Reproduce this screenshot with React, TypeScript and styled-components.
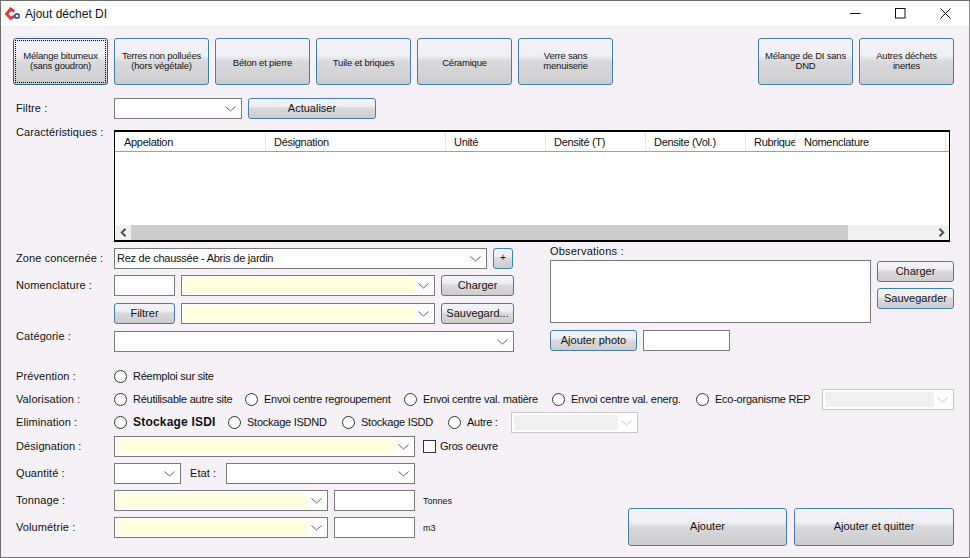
import React from 'react';
import styled, { createGlobalStyle } from 'styled-components';

const Global = createGlobalStyle`
  html, body { margin: 0; padding: 0; background: #fff; }
  * { box-sizing: border-box; }
`;

const sans = `"Liberation Sans", Arial, sans-serif`;

const Win = styled.div`
  width: 970px;
  height: 558px;
  border: 1px solid #6e6e6e;
  border-right-color: #8a8a8a;
  background: #f5f1f6;
  font-family: ${sans};
  font-size: 11px;
  color: #111;
  display: flex;
  flex-direction: column;
  overflow: hidden;
`;

const TitleBar = styled.div`
  height: 25px;
  flex: none;
  background: #fff;
  display: flex;
  align-items: center;
  padding: 0 1px 0 3px;
`;

const TitleText = styled.span`
  font-size: 12px;
  margin-left: 3px;
  flex: 1;
`;

const WinBtn = styled.div`
  width: 45px;
  height: 25px;
  display: flex;
  align-items: center;
  justify-content: center;
`;

const Content = styled.div`
  flex: 1;
  padding: 12px 15px 0 12px;
  display: flex;
  flex-direction: column;
  position: relative;
`;

const TopRow = styled.div`
  display: flex;
  gap: 6px;
  height: 47px;
  margin-bottom: 13px;
`;

const Spacer = styled.div`
  flex: 1;
`;

const Btn = styled.button<{ $w: number; $h?: number; $size?: number }>`
  width: ${p => p.$w}px;
  height: ${p => p.$h ?? 21}px;
  flex: none;
  padding: 0 2px 1px;
  border: 1px solid #3f7fb2;
  border-radius: 3px;
  background: linear-gradient(#f3f3f9 0%, #eeeef3 38%, #d9d8dc 50%, #cdcccd 100%);
  font-family: ${sans};
  font-size: ${p => p.$size ?? 11}px;
  line-height: 12px;
  color: #161616;
  text-align: center;
  white-space: nowrap;
`;

const TopBtn = styled(Btn)<{ $single?: boolean }>`
  line-height: 10px;
  letter-spacing: -0.2px;
  padding-top: ${p => (p.$single ? 3 : 0)}px;
  &[data-focus='1'] {
    outline: 1px dotted #000;
    outline-offset: -3px;
    border-color: #2b5f8a;
  }
`;

const BigBtn = styled(Btn)`
  padding-bottom: 3px;
`;

const Row = styled.div<{ $mb?: number }>`
  display: flex;
  align-items: center;
  height: 21px;
  margin-bottom: ${p => p.$mb ?? 6}px;
`;

const Label = styled.label<{ $top?: boolean; $lift?: number }>`
  width: 101px;
  flex: none;
  padding-left: 3px;
  padding-bottom: ${p => p.$lift ?? 2}px;
  font-size: 11px;
  letter-spacing: 0.1px;
  white-space: nowrap;
  align-self: ${p => (p.$top ? 'flex-start' : 'center')};
  margin-top: ${p => (p.$top ? -4 : 0)}px;
`;

const EtatLabel = styled(Label)`
  width: 38px;
  padding-left: 2px;
`;

const Box = styled.div<{ $w: number; $off?: boolean }>`
  width: ${p => p.$w}px;
  height: 21px;
  flex: none;
  background: #fff;
  border: 1px solid ${p => (p.$off ? '#c8c8c8' : '#7a7a7a')};
  position: relative;
  display: flex;
  align-items: center;
  padding: 0 0 2px 2px;
  font-size: 11px;
  letter-spacing: -0.25px;
  white-space: nowrap;
`;

const Fill = styled.div<{ $off?: boolean }>`
  position: absolute;
  left: 2px;
  top: 2px;
  bottom: 2px;
  right: 19px;
  background: ${p => (p.$off ? '#f0f0f0' : '#ffffe0')};
`;

const Chev = styled.svg`
  position: absolute;
  right: 5px;
  top: 7px;
`;

const Gap = styled.div<{ $w: number }>`
  width: ${p => p.$w}px;
  flex: none;
`;

function Select({ w, yellow, off, children }: { w: number; yellow?: boolean; off?: boolean; children?: React.ReactNode }) {
  return (
    <Box $w={w} $off={off}>
      {(yellow || off) && <Fill $off={off} />}
      {children}
      <Chev width="11" height="6" viewBox="0 0 11 6">
        <path d="M0.5 0.5 L5.5 5 L10.5 0.5" fill="none" stroke={off ? '#c4c4c4' : '#606060'} strokeWidth="1" />
      </Chev>
    </Box>
  );
}

const columns = [
  ['Appelation', 150],
  ['Désignation', 180],
  ['Unité', 100],
  ['Densité (T)', 100],
  ['Densite (Vol.)', 100],
  ['Rubrique', 50],
  ['Nomenclature', 150],
] as const;

const TableRow = styled.div`
  display: flex;
  height: 112px;
  margin-bottom: 6px;
`;

const Grid = styled.div`
  width: 836px;
  height: 112px;
  flex: none;
  background: #fff;
  border: 1px solid #000;
  border-top-width: 2px;
  border-bottom-width: 2px;
  display: flex;
  flex-direction: column;
`;

const GridHead = styled.div`
  height: 20px;
  flex: none;
  display: flex;
  padding-left: 1px;
  border-bottom: 1px solid #a0a0a0;
`;

const HeadCell = styled.div<{ $w: number }>`
  width: ${p => p.$w}px;
  flex: none;
  padding-left: 8px;
  overflow: hidden;
  white-space: nowrap;
  line-height: 20px;
  font-size: 11px;
  letter-spacing: -0.3px;
  border-right: 1px solid #e6e6e6;
`;

const GridBody = styled.div`
  flex: 1;
`;

const ScrollBar = styled.div`
  height: 15px;
  flex: none;
  background: #f0f0f0;
  display: flex;
  align-items: center;
  justify-content: space-between;
`;

const ScrollArrow = styled.div`
  width: 16px;
  height: 15px;
  flex: none;
  display: flex;
  align-items: center;
  justify-content: center;
`;

const Thumb = styled.div`
  width: 717px;
  height: 15px;
  flex: none;
  background: #cdcdcd;
  margin-right: auto;
`;

const Middle = styled.div`
  display: flex;
  height: 103px;
  margin-bottom: 14px;
`;

const LeftCol = styled.div`
  width: 500px;
  flex: none;
`;

const RightCol = styled.div`
  display: flex;
  flex-direction: column;
  margin-left: 37px;
  margin-top: -3px;
`;

const ObsLabel = styled.div`
  height: 15px;
  letter-spacing: 0.2px;
  line-height: 13px;
`;

const ObsRow = styled.div`
  display: flex;
  gap: 6px;
  height: 63px;
`;

const ObsArea = styled.textarea`
  width: 321px;
  height: 63px;
  border: 1px solid #7a7a7a;
  background: #fff;
  resize: none;
  flex: none;
`;

const ObsButtons = styled.div`
  display: flex;
  flex-direction: column;
  gap: 6px;
  padding-top: 1px;
`;

const PhotoRow = styled.div`
  display: flex;
  align-items: center;
  gap: 6px;
  margin-top: 7px;
`;

const RadioRow = styled.div`
  display: flex;
  align-items: center;
  height: 23px;
`;

const RadioItem = styled.div<{ $w: number }>`
  width: ${p => p.$w}px;
  flex: none;
  display: flex;
  align-items: center;
  gap: 6px;
  white-space: nowrap;
`;

const Circle = styled.span`
  width: 13px;
  height: 13px;
  flex: none;
  border: 1px solid #333;
  border-radius: 50%;
  background: #fff;
`;

const RadioText = styled.span<{ $bold?: boolean }>`
  font-size: ${p => (p.$bold ? 12 : 11)}px;
  font-weight: ${p => (p.$bold ? 700 : 400)};
  letter-spacing: ${p => (p.$bold ? 0.2 : -0.25)}px;
  padding-bottom: 2px;
`;

function Radio({ w, bold, children }: { w: number; bold?: boolean; children: React.ReactNode }) {
  return (
    <RadioItem $w={w}>
      <Circle />
      <RadioText $bold={bold}>{children}</RadioText>
    </RadioItem>
  );
}

const CheckBox = styled.span`
  width: 13px;
  height: 13px;
  flex: none;
  margin: 0 4px 0 8px;
  border: 1px solid #333;
  background: #fff;
`;

const Unit = styled.span`
  font-size: 9px;
  margin-left: 8px;
  padding-top: 1px;
`;

const Bottom = styled.div`
  display: flex;
  margin-top: 2px;
`;

const BottomLeft = styled.div`
  width: 615px;
  flex: none;
`;

const BottomRight = styled.div`
  display: flex;
  gap: 7px;
  align-self: flex-end;
  margin-bottom: -2px;
`;

const Logo = () => (
  <svg width="18" height="16" viewBox="0 0 18 16">
    <path d="M10.2 5.4 L6.6 3 L2.6 8 L6.6 12.4 L10.2 10.4" fill="none" stroke="#dc3a3c" strokeWidth="3" />
    <circle cx="13" cy="10" r="2.2" fill="#fff" stroke="#2d55b5" strokeWidth="1.7" />
  </svg>
);

const Arrow = ({ left }: { left?: boolean }) => (
  <svg width="7" height="9" viewBox="0 0 7 9">
    <path d={left ? 'M5.5 0.8 L1.8 4.5 L5.5 8.2' : 'M1.5 0.8 L5.2 4.5 L1.5 8.2'} fill="none" stroke="#505050" strokeWidth="2" />
  </svg>
);

const topButtons = [
  'Mélange bitumeux\n(sans goudron)',
  'Terres non polluées\n(hors végétale)',
  'Béton et pierre',
  'Tuile et briques',
  'Céramique',
  'Verre sans\nmenuiserie',
];

const lines = (s: string) =>
  s.split('\n').map((l, i) => (
    <React.Fragment key={i}>
      {i > 0 && <br />}
      {l}
    </React.Fragment>
  ));

export default function App() {
  return (
    <>
      <Global />
      <Win>
        <TitleBar>
          <Logo />
          <TitleText>Ajout déchet DI</TitleText>
          <WinBtn>
            <svg width="11" height="11" viewBox="0 0 11 11"><path d="M0 5.5 H10.5" stroke="#111" strokeWidth="1" /></svg>
          </WinBtn>
          <WinBtn>
            <svg width="11" height="11" viewBox="0 0 11 11"><rect x="0.5" y="0.5" width="9.5" height="9.5" fill="none" stroke="#111" strokeWidth="1" /></svg>
          </WinBtn>
          <WinBtn>
            <svg width="11" height="11" viewBox="0 0 11 11"><path d="M0.5 0.5 L10.5 10.5 M10.5 0.5 L0.5 10.5" stroke="#111" strokeWidth="1" /></svg>
          </WinBtn>
        </TitleBar>

        <Content>
          <TopRow>
            {topButtons.map((t, i) => (
              <TopBtn key={t} $w={95} $h={47} $size={9.5} $single={!t.includes('\n')} data-focus={i === 0 ? '1' : '0'}>
                {lines(t)}
              </TopBtn>
            ))}
            <Spacer />
            <TopBtn $w={95} $h={47} $size={9.5}>{lines('Mélange de DI sans\nDND')}</TopBtn>
            <TopBtn $w={95} $h={47} $size={9.5}>{lines('Autres déchets\ninertes')}</TopBtn>
          </TopRow>

          <Row $mb={11}>
            <Label>Filtre :</Label>
            <Select w={128} />
            <Gap $w={6} />
            <Btn $w={128}>Actualiser</Btn>
          </Row>

          <TableRow>
            <Label $top>Caractéristiques :</Label>
            <Grid>
              <GridHead>
                {columns.map(([name, w]) => (
                  <HeadCell key={name} $w={w}>{name}</HeadCell>
                ))}
              </GridHead>
              <GridBody />
              <ScrollBar>
                <ScrollArrow><Arrow left /></ScrollArrow>
                <Thumb />
                <ScrollArrow><Arrow /></ScrollArrow>
              </ScrollBar>
            </Grid>
          </TableRow>

          <Middle>
            <LeftCol>
              <Row>
                <Label>Zone concernée :</Label>
                <Select w={373}>Rez de chaussée - Abris de jardin</Select>
                <Gap $w={6} />
                <Btn $w={20} $size={10}>+</Btn>
              </Row>
              <Row $mb={7}>
                <Label>Nomenclature :</Label>
                <Box $w={61} />
                <Gap $w={6} />
                <Select w={254} yellow />
                <Gap $w={6} />
                <Btn $w={73}>Charger</Btn>
              </Row>
              <Row $mb={7}>
                <Gap $w={101} />
                <Btn $w={61}>Filtrer</Btn>
                <Gap $w={6} />
                <Select w={254} yellow />
                <Gap $w={6} />
                <Btn $w={73}>Sauvegard...</Btn>
              </Row>
              <Row>
                <Label $lift={11}>Catégorie :</Label>
                <Select w={400} />
              </Row>
            </LeftCol>
            <RightCol>
              <ObsLabel>Observations :</ObsLabel>
              <ObsRow>
                <ObsArea />
                <ObsButtons>
                  <Btn $w={77}>Charger</Btn>
                  <Btn $w={77}>Sauvegarder</Btn>
                </ObsButtons>
              </ObsRow>
              <PhotoRow>
                <Btn $w={87}>Ajouter photo</Btn>
                <Box $w={87} />
              </PhotoRow>
            </RightCol>
          </Middle>

          <RadioRow>
            <Label>Prévention :</Label>
            <Radio w={200}>Réemploi sur site</Radio>
          </RadioRow>
          <RadioRow>
            <Label>Valorisation :</Label>
            <Radio w={131}>Réutilisable autre site</Radio>
            <Radio w={159}>Envoi centre regroupement</Radio>
            <Radio w={148}>Envoi centre val. matière</Radio>
            <Radio w={144}>Envoi centre val. energ.</Radio>
            <Radio w={126}>Eco-organisme REP</Radio>
            <Select w={132} off />
          </RadioRow>
          <RadioRow>
            <Label>Elimination :</Label>
            <Radio w={114} bold>Stockage ISDI</Radio>
            <Radio w={114}>Stockage ISDND</Radio>
            <Radio w={106}>Stockage ISDD</Radio>
            <Radio w={63}>Autre :</Radio>
            <Select w={127} off />
          </RadioRow>

          <Bottom>
            <BottomLeft>
              <Row>
                <Label>Désignation :</Label>
                <Select w={301} yellow />
                <CheckBox />
                <RadioText>Gros oeuvre</RadioText>
              </Row>
              <Row>
                <Label>Quantité :</Label>
                <Select w={67} />
                <Gap $w={7} />
                <EtatLabel as="span">Etat :</EtatLabel>
                <Select w={189} />
              </Row>
              <Row>
                <Label>Tonnage :</Label>
                <Select w={214} yellow />
                <Gap $w={6} />
                <Box $w={81} />
                <Unit>Tonnes</Unit>
              </Row>
              <Row>
                <Label>Volumétrie :</Label>
                <Select w={214} yellow />
                <Gap $w={6} />
                <Box $w={81} />
                <Unit>m3</Unit>
              </Row>
            </BottomLeft>
            <BottomRight>
              <BigBtn $w={159} $h={38}>Ajouter</BigBtn>
              <BigBtn $w={160} $h={38}>Ajouter et quitter</BigBtn>
            </BottomRight>
          </Bottom>
        </Content>
      </Win>
    </>
  );
}
